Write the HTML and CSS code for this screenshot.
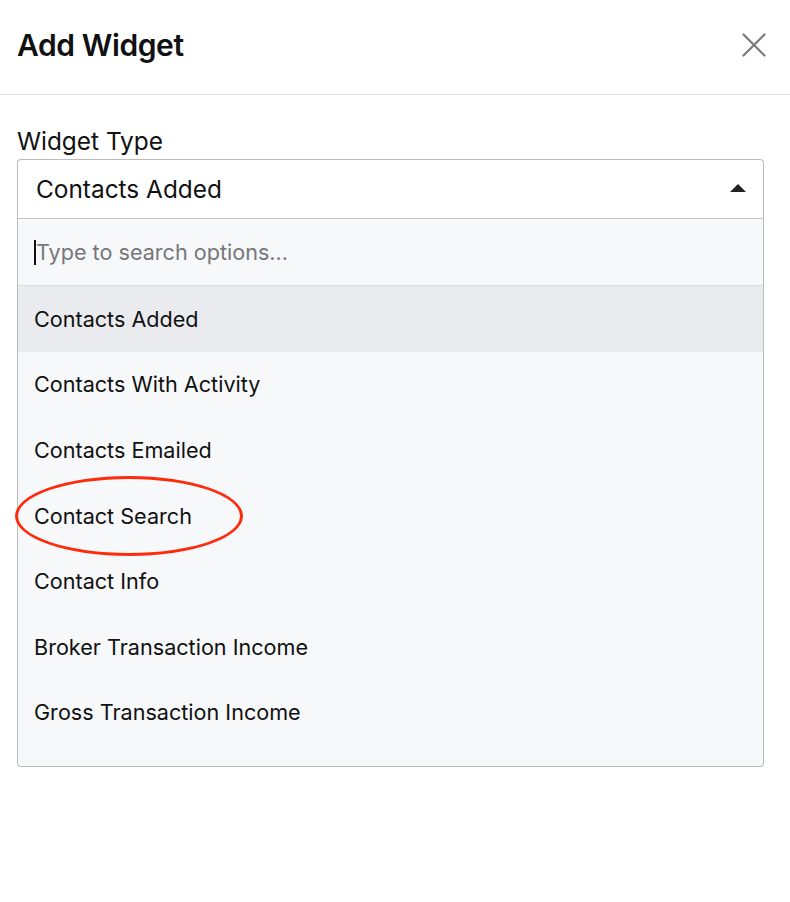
FILE: index.html
```html
<!DOCTYPE html>
<html>
<head>
<meta charset="utf-8">
<link rel="stylesheet" href="styles.css">
</head>
<body>
<div class="modal">
  <header class="modal-header">
    <h1 class="modal-title">Add Widget</h1>
    <button class="close-btn" aria-label="Close">
      <svg width="24" height="24" viewBox="0 0 24 24"><path d="M1.5 1.5 L22.5 22.5 M22.5 1.5 L1.5 22.5" stroke="#7a7a7a" stroke-width="2.2" stroke-linecap="round" fill="none"/></svg>
    </button>
  </header>
  <div class="modal-body">
    <label class="field-label">Widget Type</label>
    <div class="select">
      <div class="select-control">
        <span class="select-value">Contacts Added</span>
        <span class="caret-up"></span>
      </div>
      <div class="dropdown">
        <div class="search-row">
          <span class="text-caret"></span><span class="placeholder">Type to search options...</span>
        </div>
        <ul class="options">
          <li class="option active">Contacts Added</li>
          <li class="option">Contacts With Activity</li>
          <li class="option">Contacts Emailed</li>
          <li class="option marked">Contact Search<span class="circle"></span></li>
          <li class="option">Contact Info</li>
          <li class="option">Broker Transaction Income</li>
          <li class="option">Gross Transaction Income</li>
        </ul>
      </div>
    </div>
  </div>
</div>
</body>
</html>
```
FILE: styles.css
```css
* { box-sizing: border-box; }
html, body { margin: 0; padding: 0; background: #fff; }
body { font-family: Inter, "Liberation Sans", Arial, sans-serif; color: #111; }

.modal { width: 790px; }

.modal-header {
  height: 95px;
  border-bottom: 1px solid #e2e2e6;
  display: flex;
  align-items: center;
  justify-content: space-between;
  padding: 0 24px 4px 17px;
}
.modal-title {
  margin: 0;
  font-size: 30px;
  font-weight: 600;
  letter-spacing: -0.4px;
  color: #111;
}
.close-btn {
  border: 0;
  background: none;
  padding: 0;
  width: 24px;
  height: 24px;
  display: flex;
  cursor: pointer;
}

.modal-body { padding: 30px 26px 0 17px; }

.field-label {
  display: block;
  font-size: 24.4px;
  line-height: 32px;
  color: #111;
  margin-bottom: 2px;
}

.select { width: 747px; }

.select-control {
  height: 60px;
  border: 1px solid #bcbcbc;
  border-bottom-color: #c4c4c4;
  border-radius: 4px 4px 0 0;
  display: flex;
  align-items: center;
  justify-content: space-between;
  padding: 0 17px 0 18px;
  background: #fff;
}
.select-value { font-size: 24.4px; color: #111; }
.caret-up {
  width: 0; height: 0;
  border-left: 8px solid transparent;
  border-right: 8px solid transparent;
  border-bottom: 8px solid #222;
  margin-top: -2px;
}

.dropdown {
  border: 1px solid #bcbcbc;
  border-top: 0;
  border-radius: 0 0 4px 4px;
  background: #f7f8fa;
  padding-bottom: 21px;
}
.search-row {
  height: 67px;
  border-bottom: 1px solid #dcdde0;
  display: flex;
  align-items: center;
  padding-left: 16px;
}
.text-caret {
  width: 2px;
  height: 25px;
  background: #111;
}
.placeholder { font-size: 21.6px; color: #76777a; }

.options { list-style: none; margin: 0; padding: 0; }
.option {
  height: 65.6px;
  display: flex;
  align-items: center;
  padding-left: 16px;
  font-size: 21.6px;
  color: #111;
  position: relative;
}
.option.active { background: #eaebee; }

.circle {
  position: absolute;
  left: -3px;
  top: -7px;
  width: 228px;
  height: 80px;
  border: 3px solid #ff2a0a;
  border-radius: 50%;
  pointer-events: none;
}
```
